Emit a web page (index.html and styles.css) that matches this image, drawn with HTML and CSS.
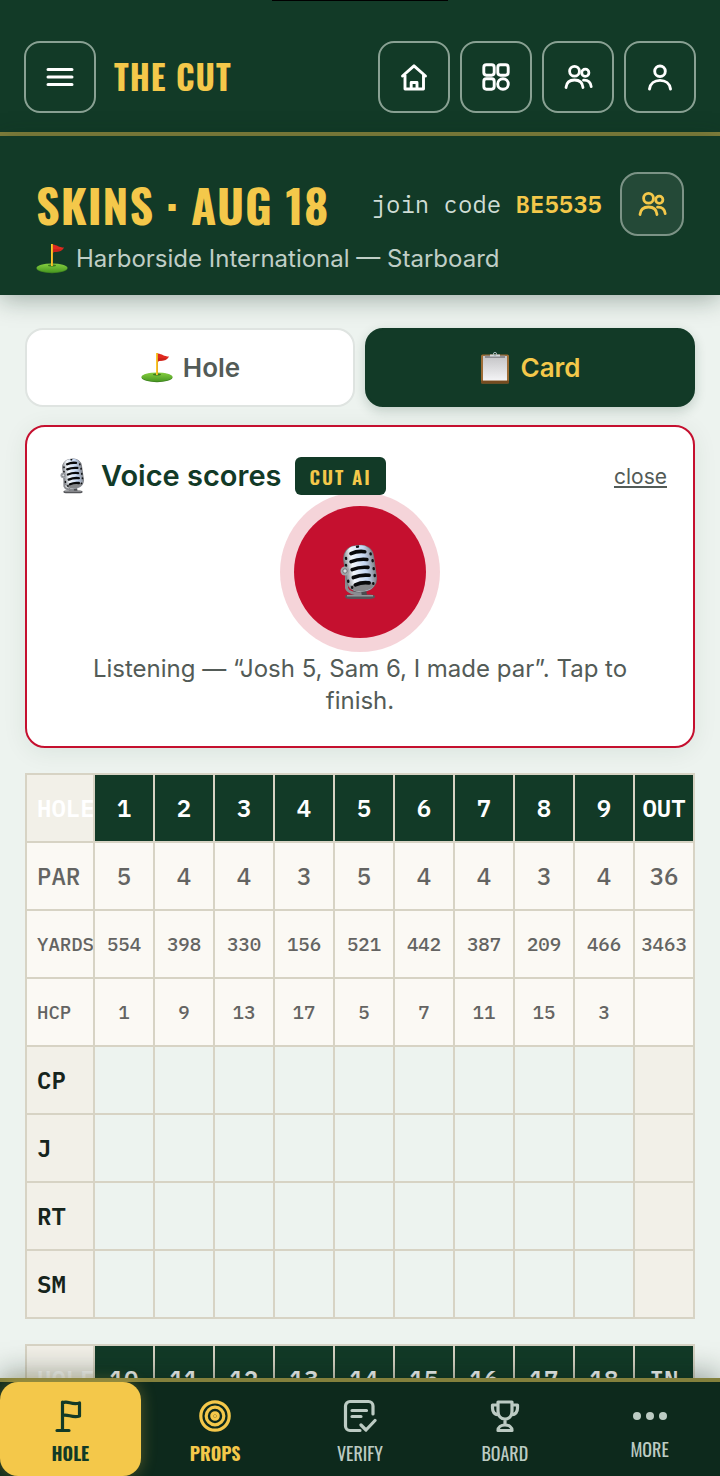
FILE: index.html
```html
<!DOCTYPE html>
<html lang="en">
<head>
  <meta charset="UTF-8" />
  <meta name="viewport" content="width=device-width, initial-scale=1.0"/>
  <title>The Cut - Scorecard</title>
  <link rel="stylesheet" href="styles.css">
</head>
<body>

  <svg class="sprite" aria-hidden="true">
    <defs>
      <linearGradient id="poleGrad" x1="0" x2="1" y1="0" y2="0">
        <stop offset="0" stop-color="#ffd52e"/>
        <stop offset="1" stop-color="#e5a11f"/>
      </linearGradient>
      <linearGradient id="turfGrad" x1="0" x2="0" y1="0" y2="1">
        <stop offset="0" stop-color="#87cf40"/>
        <stop offset="1" stop-color="#4a9a22"/>
      </linearGradient>
      <linearGradient id="micGrad" x1="0" x2="1" y1="0" y2="0">
        <stop offset="0" stop-color="#8c9096"/>
        <stop offset="0.25" stop-color="#f4f8fc"/>
        <stop offset="0.7" stop-color="#c4d6f2"/>
        <stop offset="1" stop-color="#84888f"/>
      </linearGradient>
      <linearGradient id="paperGrad" x1="0" x2="0" y1="0" y2="1">
        <stop offset="0" stop-color="#c4c4c6"/>
        <stop offset="1" stop-color="#f4f4f6"/>
      </linearGradient>
    </defs>

    <symbol id="flag" viewBox="0 0 32 32">
      <ellipse cx="16" cy="25.6" rx="15.4" ry="4.6" fill="#3e831f"/>
      <ellipse cx="16" cy="24.8" rx="15.4" ry="4.4" fill="url(#turfGrad)"/>
      <ellipse cx="16" cy="22.6" rx="4" ry="1" fill="#3c7a1d"/>
      <path d="M15 1h2v22h-2z" fill="url(#poleGrad)"/>
      <path d="M17 1.400c4 .4 6 3 11 3-1 2-3 4-6 4.200-2 .2-3 .4-5 1z" fill="#e0291f"/>
      <path d="M17 6.500c3-1 6 .5 9-.5-1 1.500-3 2.500-5 2.600-2 .2-2.500.4-4 1z" fill="#c9211a"/>
    </symbol>

    <symbol id="clipboard" viewBox="0 0 32 32">
      <rect x="2" y="2.500" width="28" height="29" rx="1.500" fill="#9d6c35"/>
      <rect x="2" y="28.500" width="28" height="3" rx="1" fill="#754b20"/>
      <rect x="4" y="4" width="24" height="24.500" fill="url(#paperGrad)"/>
      <path d="M6 3.500h20v2.500H6z" fill="#8c8c90"/>
      <path d="M11 2.500h10v2H11z" fill="#d5d8dc"/>
      <circle cx="16" cy="2" r="1.600" fill="none" stroke="#a9b9bb" stroke-width="1"/>
    </symbol>

    <symbol id="mic" viewBox="0 0 40 56">
      <path d="M5 52.500c0-1.500 2-2 6-2h15c6 0 9 .5 9 2s-2 2.500-7 2.500H12c-5 0-7-.8-7-2.500z" fill="#55565a"/>
      <path d="M7 51.800h26" stroke="#a5a7ab" stroke-width="1.200"/>
      <path d="M13 45l1 6h13l-1-6z" fill="#4b4c50"/>
      <path d="M6.500 25v19c1 4 8 6.500 15 5.500" fill="none" stroke="#8a8c91" stroke-width="3"/>
      <g transform="rotate(-8 20 24)">
        <rect x="4.500" y="1" width="31" height="47" rx="13" fill="#77797e"/>
        <rect x="5.500" y="1.500" width="29" height="46" rx="12" fill="url(#micGrad)"/>
        <path d="M7 40h26c-1.500 5-6 7.500-13 7.500S8.500 45 7 40z" fill="#85878a"/>
        <g stroke="#08090b" stroke-width="3.600" stroke-linecap="round" fill="none">
          <path d="M13 8.500q7-2 14 0"/>
          <path d="M12 16.500q8-2 16 0"/>
          <path d="M12 24.500q8-2 16 0"/>
          <path d="M12 32.500q8-2 16 0"/>
          <path d="M13 40q7-2 14 0"/>
        </g>
        <g stroke="#111214" stroke-width="2.400" stroke-linecap="round">
          <path d="M7.500 12v1M6.500 19v1M6.500 35v1M9.500 42v.5M32.500 11v1M33.500 18v1M33.500 26v1M33.500 33v1M31 41v.5M20 2.500h1"/>
        </g>
      </g>
      <circle cx="5" cy="27" r="4.500" fill="#a3a6ab"/>
      <circle cx="5" cy="27" r="2.200" fill="#d7dade" stroke="#5d5f62" stroke-width=".8"/>
    </symbol>

    <symbol id="people" viewBox="0 0 30 28">
      <g fill="none" stroke="currentColor" stroke-width="2.800" stroke-linecap="round">
        <circle cx="11.500" cy="8.300" r="4.900"/>
        <circle cx="22.300" cy="9.800" r="3.600"/>
        <path d="M3 24.500c.5-5 4-7.500 8.500-7.500s8 2.500 8.500 7.500"/>
        <path d="M20.500 17.200c4.500-.2 7.200 2.500 7.700 6.500"/>
      </g>
    </symbol>
  </svg>

  <div class="app">
    <div class="island"></div>

    <header class="topbar">
      <button class="icon-btn" type="button" aria-label="Menu">
        <svg width="28" height="28" viewBox="0 0 28 28" fill="none" stroke="currentColor" stroke-width="3" stroke-linecap="round">
          <path d="M2 6.500h24M2 14h24M2 21.500h24"/>
        </svg>
      </button>
      <div class="brand">THE CUT</div>
      <nav class="top-links">
        <button class="icon-btn" type="button" aria-label="Home">
          <svg width="28" height="28" viewBox="0 0 28 28" fill="none" stroke="currentColor" stroke-width="2.900" stroke-linecap="round" stroke-linejoin="round">
            <path d="M2.500 13L14 2.800 25.500 13M5 12v14h18.500V12M11.200 26v-6.500h5.800V26"/>
          </svg>
        </button>
        <button class="icon-btn" type="button" aria-label="Apps">
          <svg width="28" height="28" viewBox="0 0 28 28" fill="none" stroke="currentColor" stroke-width="2.900">
            <rect x="1.800" y="1.800" width="10.400" height="10.400" rx="2.600"/>
            <rect x="15.800" y="1.800" width="10.400" height="10.400" rx="2.600"/>
            <rect x="1.800" y="15.800" width="10.400" height="10.400" rx="2.600"/>
            <circle cx="21" cy="21" r="5.300"/>
          </svg>
        </button>
        <button class="icon-btn" type="button" aria-label="Players">
          <svg width="30" height="28"><use href="#people"/></svg>
        </button>
        <button class="icon-btn" type="button" aria-label="Profile">
          <svg width="28" height="28" viewBox="0 0 28 28" fill="none" stroke="currentColor" stroke-width="2.900" stroke-linecap="round">
            <circle cx="14" cy="8.300" r="5.300"/>
            <path d="M3.500 26c.8-5.500 5-8.600 10.500-8.600s9.700 3.100 10.500 8.600"/>
          </svg>
        </button>
      </nav>
    </header>

    <section class="hero">
      <div class="hero-row">
        <h1>SKINS · AUG 18</h1>
        <p class="join">join code <strong>BE5535</strong></p>
        <button class="crew-btn" type="button" aria-label="Show players">
          <svg width="30" height="28"><use href="#people"/></svg>
        </button>
      </div>
      <p class="course"><svg width="32" height="32"><use href="#flag"/></svg>Harborside International — Starboard</p>
    </section>

    <main class="content">
      <div class="tabs">
        <button class="tab" type="button"><svg width="34" height="32"><use href="#flag"/></svg>Hole</button>
        <button class="tab active" type="button"><svg width="32" height="32"><use href="#clipboard"/></svg>Card</button>
      </div>

      <section class="voice">
        <div class="voice-head">
          <svg width="40" height="36"><use href="#mic"/></svg>
          <h2>Voice scores</h2>
          <span class="badge">CUT AI</span>
          <button class="close-btn" type="button">close</button>
        </div>
        <button class="record" type="button" aria-label="Stop listening">
          <svg width="40" height="56"><use href="#mic"/></svg>
        </button>
        <p>Listening — “Josh 5, Sam 6, I made par”. Tap to finish.</p>
      </section>

      <table class="scorecard">
        <thead>
          <tr><th class="label">HOLE</th><th>1</th><th>2</th><th>3</th><th>4</th><th>5</th><th>6</th><th>7</th><th>8</th><th>9</th><th>OUT</th></tr>
        </thead>
        <tbody>
          <tr class="info"><th class="label">PAR</th><td>5</td><td>4</td><td>4</td><td>3</td><td>5</td><td>4</td><td>4</td><td>3</td><td>4</td><td>36</td></tr>
          <tr class="info small"><th class="label">YARDS</th><td>554</td><td>398</td><td>330</td><td>156</td><td>521</td><td>442</td><td>387</td><td>209</td><td>466</td><td>3463</td></tr>
          <tr class="info small"><th class="label">HCP</th><td>1</td><td>9</td><td>13</td><td>17</td><td>5</td><td>7</td><td>11</td><td>15</td><td>3</td><td></td></tr>
          <tr><th class="label">CP</th><td></td><td></td><td></td><td></td><td></td><td></td><td></td><td></td><td></td><td class="total"></td></tr>
          <tr><th class="label">J</th><td></td><td></td><td></td><td></td><td></td><td></td><td></td><td></td><td></td><td class="total"></td></tr>
          <tr><th class="label">RT</th><td></td><td></td><td></td><td></td><td></td><td></td><td></td><td></td><td></td><td class="total"></td></tr>
          <tr><th class="label">SM</th><td></td><td></td><td></td><td></td><td></td><td></td><td></td><td></td><td></td><td class="total"></td></tr>
        </tbody>
      </table>

      <table class="scorecard">
        <thead>
          <tr><th class="label">HOLE</th><th>10</th><th>11</th><th>12</th><th>13</th><th>14</th><th>15</th><th>16</th><th>17</th><th>18</th><th>IN</th></tr>
        </thead>
      </table>
    </main>

    <nav class="bottom-nav">
      <button class="nav-item current" type="button">
        <svg width="32" height="34" viewBox="0 0 32 34" fill="none" stroke="currentColor" stroke-width="3.200" stroke-linecap="round" stroke-linejoin="round">
          <path d="M8.500 31V3M3 31.500h12M8.500 4c5-3 9 2.500 17 0v13c-7 2.500-12-2.500-17-.5"/>
        </svg>
        HOLE
      </button>
      <button class="nav-item hot" type="button">
        <svg width="34" height="34" viewBox="0 0 34 34" fill="none" stroke="currentColor" stroke-width="3.200">
          <circle cx="17" cy="17" r="14.200"/>
          <circle cx="17" cy="17" r="8.800"/>
          <circle cx="17" cy="17" r="3.200"/>
          <circle cx="17" cy="17" r="1.600" fill="currentColor" stroke="none"/>
        </svg>
        PROPS
      </button>
      <button class="nav-item" type="button">
        <svg width="34" height="34" viewBox="0 0 34 34" fill="none" stroke="currentColor" stroke-width="3.200" stroke-linecap="round" stroke-linejoin="round">
          <path d="M17 31.500H7A4.500 4.500 0 0 1 2.500 27V7A4.500 4.500 0 0 1 7 2.500h18.500A4.500 4.500 0 0 1 30 7v8M9 11.500h14.500M9 17.500h9M18 26l5 5L32 21.500"/>
        </svg>
        VERIFY
      </button>
      <button class="nav-item" type="button">
        <svg width="32" height="34" viewBox="0 0 32 34" fill="none" stroke="currentColor" stroke-width="3.200" stroke-linecap="round" stroke-linejoin="round">
          <path d="M9 3h14v9c0 5-3 8-7 8s-7-3-7-8zM9 6H3.500v3c0 4 2.500 6.500 6 7M23 6h5.500v3c0 4-2.500 6.500-6 7M16 20v6M9 31.500c0-3.500 3-5.500 7-5.500s7 2 7 5.500z"/>
        </svg>
        BOARD
      </button>
      <button class="nav-item" type="button">
        <svg width="36" height="26" viewBox="0 0 36 26" fill="currentColor">
          <circle cx="5" cy="13" r="4"/>
          <circle cx="18" cy="13" r="4"/>
          <circle cx="31" cy="13" r="4"/>
        </svg>
        MORE
      </button>
    </nav>
  </div>

</body>
</html>
```

FILE: styles.css
```css
* {
  margin: 0;
  padding: 0;
  box-sizing: border-box;
}

body {
  font-family: Inter, "Liberation Sans", sans-serif;
  background: #edf3ef;
  color: #123a27;
}

button {
  font-family: inherit;
  border: none;
  background: none;
  cursor: pointer;
}

.sprite {
  position: absolute;
  width: 0;
  height: 0;
}

.app {
  display: flex;
  flex-direction: column;
  height: 100vh;
  overflow: hidden;
}

.island {
  position: absolute;
  top: 0;
  left: 50%;
  width: 176px;
  height: 1px;
  margin-left: -88px;
  background: #000;
}

/* Top bar */
.topbar {
  display: flex;
  align-items: center;
  gap: 18px;
  padding: 41px 24px 19px;
  background: #123a27;
  border-bottom: 4px solid #83803c;
}

.icon-btn {
  display: flex;
  align-items: center;
  justify-content: center;
  width: 72px;
  height: 72px;
  color: #fff;
  border: 2px solid #89a193;
  border-radius: 16px;
}

.brand, h1, .badge, .nav-item {
  font-family: Oswald, "Liberation Sans Narrow", "Liberation Sans", sans-serif;
}

.brand {
  color: #f4c84a;
  font-size: 33px;
  font-weight: bold;
  line-height: 46px;
  letter-spacing: 1px;
}

.top-links {
  display: flex;
  gap: 10px;
  margin-left: auto;
}

/* Round header */
.hero {
  padding: 35px 36px 19px;
  background: #123a27;
  box-shadow: 0 4px 24px rgba(10, 40, 25, 0.35);
  z-index: 1;
}

.hero-row {
  display: flex;
  align-items: center;
  height: 65px;
}

h1 {
  color: #f4c84a;
  font-size: 46px;
  line-height: 64px;
  letter-spacing: 1px;
  white-space: nowrap;
}

.join {
  margin-left: auto;
  margin-right: 18px;
  color: #cfddd5;
  font-family: "IBM Plex Mono", "DejaVu Sans Mono", "Liberation Mono", monospace;
  font-size: 24px;
  white-space: nowrap;
}

.join strong {
  color: #f4c84a;
  font-weight: 600;
}

.crew-btn {
  display: flex;
  align-items: center;
  justify-content: center;
  width: 64px;
  height: 64px;
  color: #f4c84a;
  background: rgba(255, 255, 255, 0.08);
  border: 2px solid #7c9386;
  border-radius: 18px;
}

.course {
  display: flex;
  align-items: center;
  gap: 8px;
  margin-top: 6px;
  color: #c0cec6;
  font-size: 24px;
  line-height: 34px;
}

/* Scrolling area */
.content {
  flex: 1;
  min-height: 0;
  overflow: hidden;
  padding: 33px 25px;
}

.tabs {
  display: grid;
  grid-template-columns: 1fr 1fr;
  gap: 10px;
  margin-bottom: 18px;
}

.tab {
  display: flex;
  align-items: center;
  justify-content: center;
  gap: 9px;
  height: 79px;
  color: #535b57;
  background: #fff;
  border: 2px solid #dfe4e1;
  border-radius: 18px;
  font-size: 26px;
  font-weight: 600;
}

.tab.active {
  color: #f4c84a;
  background: #123a27;
  border-color: #123a27;
  box-shadow: 0 4px 12px rgba(19, 58, 39, 0.2);
}

.voice {
  padding: 30px 26px 29px;
  background: #fff;
  border: 2px solid #c5102f;
  border-radius: 20px;
  box-shadow: 0 4px 24px rgba(19, 58, 39, 0.08);
  text-align: center;
}

.voice-head {
  display: flex;
  align-items: center;
  gap: 8px;
  height: 38px;
}

.voice-head h2 {
  font-size: 29px;
  font-weight: 600;
  line-height: 36px;
}

.badge {
  margin-left: 6px;
  padding: 0 14px;
  color: #f4c84a;
  background: #123a27;
  border-radius: 6px;
  font-size: 19px;
  font-weight: 600;
  line-height: 38px;
  letter-spacing: 2px;
}

.close-btn {
  margin-left: auto;
  color: #535b57;
  font-size: 21px;
  text-decoration: underline;
}

.record {
  display: flex;
  align-items: center;
  justify-content: center;
  width: 132px;
  height: 132px;
  margin: 11px auto 15px;
  background: #c5102f;
  border-radius: 50%;
  box-shadow: 0 0 0 14px rgba(197, 16, 47, 0.18);
}

.voice p {
  padding: 0 24px;
  color: #535b57;
  font-size: 24px;
  line-height: 32px;
}

/* Scorecard */
.scorecard {
  width: 100%;
  margin-top: 25px;
  border-collapse: collapse;
  table-layout: fixed;
  font-family: "IBM Plex Mono", "DejaVu Sans Mono", "Liberation Mono", monospace;
  font-size: 24px;
}

.scorecard th, .scorecard td {
  height: 68px;
  border: 2px solid #d7d3c4;
  font-weight: 600;
  text-align: center;
  white-space: nowrap;
}

.scorecard thead th {
  color: #fff;
  background: #123a27;
}

.scorecard .label {
  width: 68px;
  padding-left: 10px;
  overflow: hidden;
  color: #16241c;
  background: #f2f0e8;
  text-align: left;
}

.scorecard thead .label {
  color: #fff;
  background: #f2f0e8;
}

.scorecard .info th, .scorecard .info td {
  color: #646462;
  background: #fbf9f4;
  font-weight: 500;
}

.scorecard .small th, .scorecard .small td {
  font-size: 19px;
}

.scorecard .total {
  background: #f2f0e8;
}

/* Bottom navigation */
.bottom-nav {
  display: grid;
  grid-template-columns: repeat(5, 1fr);
  gap: 4px;
  height: 98px;
  background: #0d291c;
  border-top: 4px solid #83803c;
  box-shadow: 0 -4px 28px rgba(10, 30, 20, 0.4);
  z-index: 1;
}

.nav-item {
  display: flex;
  flex-direction: column;
  align-items: center;
  justify-content: center;
  gap: 8px;
  padding-top: 6px;
  color: #bccbc3;
  font-size: 18px;
  line-height: 24px;
}

.nav-item.hot {
  color: #f4c84a;
  font-weight: bold;
}

.nav-item.current {
  color: #123a27;
  background: #f4c84a;
  border-radius: 18px;
  box-shadow: 0 0 16px rgba(244, 200, 74, 0.3);
  font-weight: bold;
}
```
